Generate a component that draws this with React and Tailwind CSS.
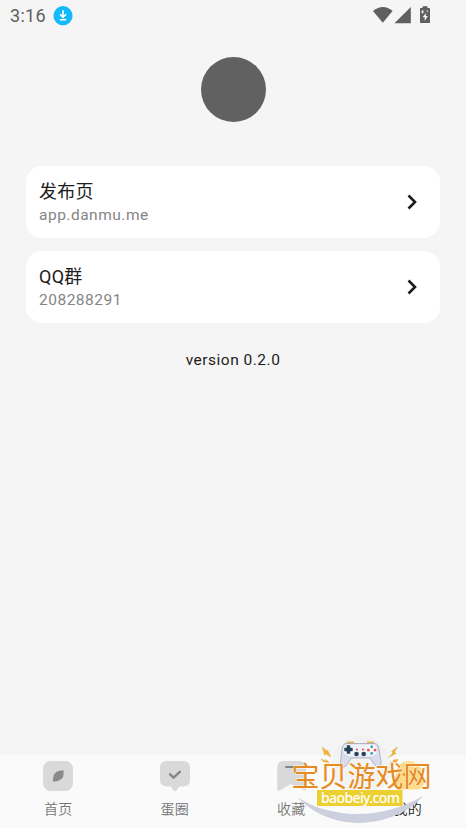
import React from 'react';

const links = [
    { title: '发布页', detail: 'app.danmu.me' },
    { title: 'QQ群', detail: '208288291' },
];

const HomeIcon = () => (
    <svg width="32" height="32" viewBox="0 0 32 32">
        <rect x="1" y="1" width="30" height="30" rx="7.5" fill="#d9d9d9" />
        <path d="M21.9 10.6C17 10 13.500 12 12.500 14C10.800 16 11.500 18.500 10.700 21.500C15.500 22 18.500 20 20 18.500C22.200 16.500 21 14 21.900 10.600Z" fill="#8b8b8b" />
    </svg>
);

const CircleIcon = () => (
    <svg width="32" height="32" viewBox="0 0 32 32">
        <path
            d="M8 1H24Q31 1 31 8V19.5Q31 26.5 24 26.5H20.5L17.4 30.4Q16 32 14.6 30.4L11.5 26.5H8Q1 26.5 1 19.5V8Q1 1 8 1Z"
            fill="#d9d9d9"
        />
        <path d="M11 14.3L14.6 17.7L20.8 11.8" fill="none" stroke="#858585" strokeWidth="2.3" strokeLinecap="round" strokeLinejoin="round" />
    </svg>
);

const FavoriteIcon = () => (
    <svg width="32" height="32" viewBox="0 0 32 32">
        <path d="M8.5 1H24Q31 1 31 8V29Q31 31 29 30.2L16 24L5 30.6Q2.2 31.5 2.2 29V8Q2.2 1 8.5 1Z" fill="#d9d9d9" />
        <path d="M11 7H21.5" stroke="#858585" strokeWidth="2" strokeLinecap="round" />
    </svg>
);

const MineIcon = () => (
    <svg width="32" height="32" viewBox="0 0 32 32">
        <circle cx="17" cy="14" r="13" fill="#ffdb87" />
        <rect x="1" y="15" width="31" height="14.5" rx="7" fill="#ffdb87" />
        <circle cx="12" cy="14.5" r="1.5" fill="#f49b25" />
        <circle cx="21" cy="14.5" r="1.5" fill="#f49b25" />
    </svg>
);

const tabs = [
    { label: '首页', Icon: HomeIcon },
    { label: '蛋圈', Icon: CircleIcon },
    { label: '收藏', Icon: FavoriteIcon },
    { label: '我的', Icon: MineIcon, active: true },
];

const StatusBar = () => (
    <div className="flex h-8 items-center justify-between pr-[35px] pl-2.5 text-[#5f5f5f]">
        <div className="flex items-center gap-[7px]">
            <span className="text-[18px] leading-none tracking-[0.3px]">3:16</span>
            <svg width="20" height="20" viewBox="0 0 20 20">
                <circle cx="10" cy="9.7" r="9.6" fill="#12b9fb" />
                <path d="M10 4.2V10.7M7 8.3L10 11.3L13 8.3M6.8 13.8H13.2" fill="none" stroke="#fff" strokeWidth="1.6" />
            </svg>
        </div>
        <svg width="58" height="20" viewBox="0 0 58 20" fill="#5f5f5f">
            <path d="M0 5Q10 -3 19.6 5L9.8 16.8Z" />
            <path d="M37.8 1V17.2H21.5Z" />
            <path d="M49.5 .2H54.5V1.9H56.2Q57 1.9 57 2.7V16.2Q57 17.1 56 17.1H47.8Q47 17.1 47 16.2V2.7Q47 1.9 47.8 1.9H49.5Z" />
            <path d="M53.2 7L49.5 11.3H51.7V15L54.8 10H52.8ZM48.6 7V4.6H50.6L50.2 7.4ZM53.4 4.5H55L54.3 6.6Z" fill="#f5f5f5" />
        </svg>
    </div>
);

const LinkCard = ({ title, detail }) => (
    <button className="flex h-[72px] w-full items-center justify-between rounded-2xl bg-white pt-0.5 pr-[18px] pl-[13px] text-left">
        <div>
            <div className="text-[18px] leading-6 tracking-[0.3px] text-[#1d1b20]">{title}</div>
            <div className="text-[15.5px] leading-[23px] tracking-[0.5px] text-[#858585]">{detail}</div>
        </div>
        <svg className="mb-0.5" width="20" height="20" viewBox="0 0 20 20">
            <path d="M6.5 3.5L13 10L6.5 16.5" fill="none" stroke="#1d1b20" strokeWidth="2.6" />
        </svg>
    </button>
);

/* Site badge floating over the right end of the tab bar */
const SiteBadge = () => (
    <svg
        className="pointer-events-none absolute right-[26px] bottom-0"
        width="160"
        height="98"
        viewBox="280 730 160 98"
    >
        <circle cx="361" cy="766" r="30" fill="#eeeeee" opacity=".6" />

        {/* Swoosh */}
        <path d="M310 800H402L404 807Q380 818 350 815Q326 812 310 800Z" fill="#fafafa" />
        <path d="M297 797C312 812 332 822.500 358 823C386 822.500 409 812 423 796C402 808 378 815 352 814C329 812.500 313 807 297 797Z" fill="#cccfdd" />

        {/* Controller */}
        <path d="M347 744V741.500H354V744ZM367 744V741.500H374V744Z" fill="#eab64d" />
        <path
            d="M346 743.5H375Q378.5 744 379 749L381 761Q381.5 768 378 767.5Q375.5 767 370 758H351Q347 766 344 767Q340.5 768 340.5 762L342 749Q342.5 744 346 743.5Z"
            fill="#d9dce9"
            stroke="#a2a6ba"
            strokeWidth=".8"
        />
        <path d="M347 744.5H374L377 748Q378 756 371 756.5H351Q342.5 756 343.5 748Z" fill="#f1f2f8" />
        <circle cx="348.5" cy="749.5" r="5" fill="#fff" />
        <path d="M348.5 745.300V753.700M344.300 749.5H352.700" stroke="#24445d" strokeWidth="3.6" />
        <circle cx="357" cy="749.5" r="1.1" fill="#e75757" />
        <circle cx="363" cy="749.5" r="1.1" fill="#e75757" />
        <circle cx="356.5" cy="754" r="2.3" fill="#24445d" />
        <circle cx="363.7" cy="754" r="2.3" fill="#24445d" />
        <circle cx="371.7" cy="750" r="5" fill="#fff" />
        <circle cx="371.7" cy="746.7" r="1.5" fill="#38a5c5" />
        <circle cx="371.7" cy="753.3" r="1.5" fill="#38a5c5" />
        <circle cx="368.4" cy="750" r="1.5" fill="#e75757" />
        <circle cx="375" cy="750" r="1.5" fill="#e75757" />

        {/* Sparks */}
        <g fill="#f7b52c" stroke="#d89b38" strokeWidth=".4">
            <path d="M322 747L327.500 751.500L327.500 750L331 757L325 753.500L325 755.500Z" />
            <path d="M321 759L325.5 761L326 759.500L329 762.5L324 762Z" />
            <path d="M397.5 747L391.500 751.500L393 753L388.5 757.500L396 753.5L394.5 752Z" />
            <path d="M398 759.5L393 760L394 761.5L390 762.500L396.5 762Z" />
        </g>

        <text
            x="291.6"
            y="787"
            className="font-['Noto_Sans_CJK_SC',sans-serif] text-[28px]"
            fill="#e68a22"
            stroke="#fffaf0"
            strokeWidth=".8"
            paintOrder="stroke"
        >
            宝贝游戏网
        </text>
        <rect x="317" y="790" width="85.5" height="16" fill="#ecd032" />
        <text x="321" y="802.5" textLength="79" className="font-['Noto_Sans',sans-serif] text-[14px] font-medium" fill="#fff">
            baobeiy.com
        </text>
    </svg>
);

const TabBar = () => (
    <nav className="relative grid h-[73px] grid-cols-4 bg-[#fafafa]">
        {tabs.map(({ label, Icon, active }) => (
            <button key={label} className="flex flex-col items-center pt-[5px]">
                <Icon />
                <span className={`mt-[5px] text-[14px] leading-6 font-[350] tracking-[0.3px] ${active ? 'text-[#1d1b20]' : 'text-[#777777]'}`}>
                    {label}
                </span>
            </button>
        ))}
        <SiteBadge />
    </nav>
);

const App = () => (
    <div className="flex h-screen flex-col overflow-hidden bg-[#f5f5f5] font-[Roboto,'Noto_Sans_CJK_SC',sans-serif]">
        <StatusBar />
        <main className="flex flex-1 flex-col items-center px-[26px] pt-[25px]">
            <div className="size-[65px] shrink-0 rounded-full bg-[#616161]" />
            <div className="mt-11 flex w-full flex-col gap-[13px]">
                {links.map(link => (
                    <LinkCard key={link.title} {...link} />
                ))}
            </div>
            <div className="mt-[25px] text-[15.5px] leading-6 tracking-[0.5px] text-[#1d1b20]">version 0.2.0</div>
        </main>
        <TabBar />
    </div>
);

export default App;
